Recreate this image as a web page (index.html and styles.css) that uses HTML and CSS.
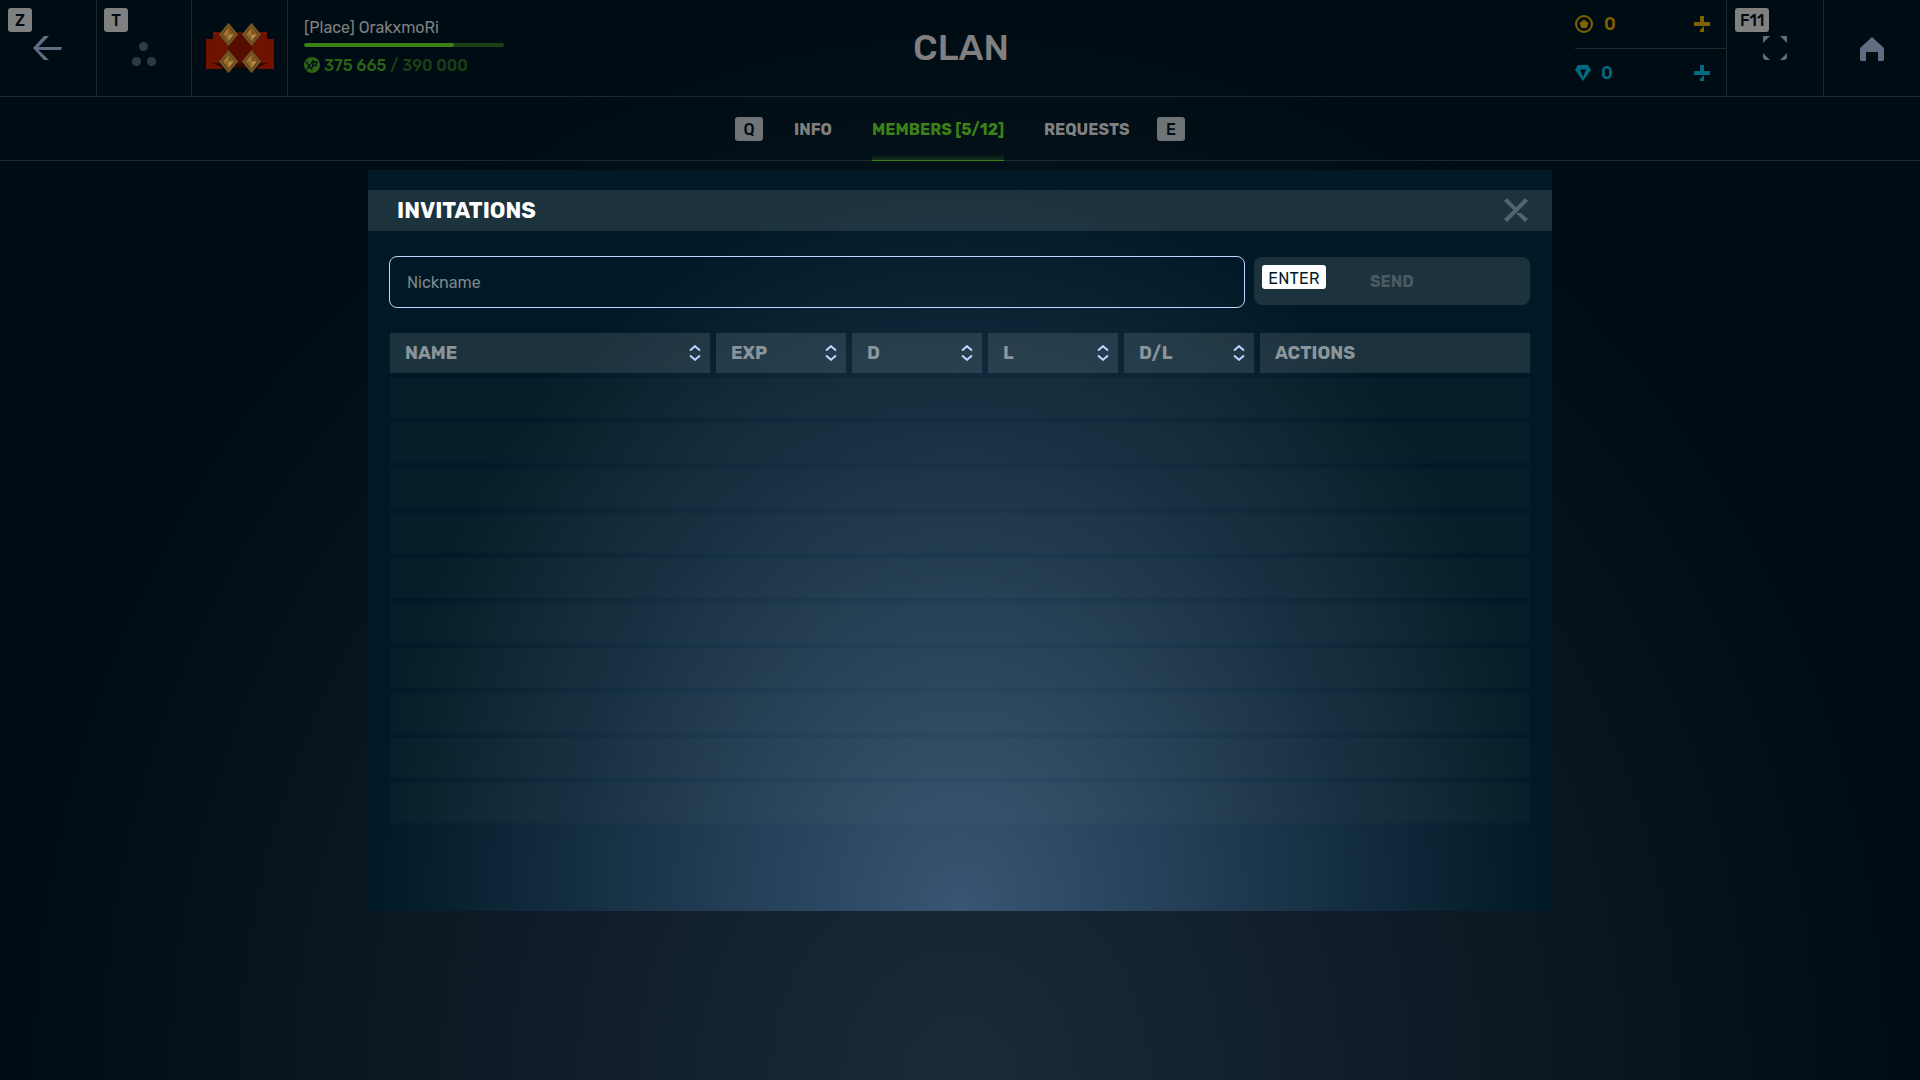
FILE: index.html
```html
<!DOCTYPE html>
<html lang="en">
<head>
<meta charset="utf-8">
<title>Clan</title>
<link rel="stylesheet" href="styles.css">
</head>
<body>
<div class="screen">
  <header class="topbar">
    <div class="cell cell-back"><span class="key corner">Z</span>
      <svg width="30" height="26" viewBox="0 0 30 26" fill="#616b82"><path d="M11 1h5L5.500 12h23.500l-1 3H5.500L16 25h-5L0 13z"/></svg>
    </div>
    <div class="cell cell-menu"><span class="key corner">T</span>
      <svg width="26" height="26" viewBox="0 0 26 26" fill="#2e3949"><circle cx="12.500" cy="5.500" r="4.500"/><circle cx="5.500" cy="20.500" r="4.500"/><circle cx="20.500" cy="20.500" r="4.500"/></svg>
    </div>
    <div class="cell cell-rank">
      <svg width="70" height="52" viewBox="0 0 70 52">
        <defs><g id="gem"><path d="M0-11.500 9.500 0 0 11.500-9.500 0z" fill="#7d5827" stroke="#4a3a20" stroke-width=".8"/><path d="M0-8 6.500 0 0 8-6.500 0z" fill="#8d6428" stroke="#4e3210" stroke-width=".8"/><path d="M0-6V0H-5z" fill="#a27a3b"/><path d="M0-6 5 0 0 1z" fill="#81551e"/><path d="M0 6V0L5 0z" fill="#b48d4b"/></g></defs>
        <path d="M1 16h12l7 27-4 3H1zM57 16h12v30H54l-4-3z" fill="#6f1200"/><path d="M8 40h54l-10 5H18z" fill="#300700"/><path d="M8 9h54v31H8z" fill="#6f1200"/><path d="M23 9h24v31H23z" fill="#570c00"/>
        <use href="#gem" x="23.500" y="11.500"/><use href="#gem" x="46.500" y="11.500"/><use href="#gem" x="23.500" y="38.500"/><use href="#gem" x="46.500" y="38.500"/>
      </svg>
    </div>
    <div class="player">
      <div class="nick">[Place] OrakxmoRi</div>
      <div class="progress"><div class="progress-fill" style="width:75%"></div></div>
      <div class="exp">
        <svg width="16" height="16" viewBox="0 0 16 16"><circle cx="8" cy="8" r="8" fill="#2c6417"/><path d="M2 4.500 7 12M9.500 3 2.500 13M7.500 12.500 9.500 5h3.500L12 8.500H9" fill="none" stroke="#000c12" stroke-width="1.300"/></svg>
        <b>375 665</b><span class="exp-max">/ 390 000</span>
      </div>
    </div>
    <h1 class="title">CLAN</h1>
    <div class="wallet">
      <div class="money gold">
        <svg width="18" height="18" viewBox="0 0 18 18"><circle cx="9" cy="9" r="8" fill="none" stroke="currentColor" stroke-width="2"/><path d="M9 4.500 13.500 7.900 11.800 13H6.200L4.500 7.900z" fill="currentColor"/></svg>
        <b>0</b>
        <svg class="plus" width="16" height="16" viewBox="0 0 16 16" fill="currentColor"><path d="M6 0h4v6h6v4h-6v6H6v-2l4-4H0V6h6z"/></svg>
      </div>
      <div class="money ruby">
        <svg width="16" height="16" viewBox="0 0 16 16"><path fill="currentColor" fill-rule="evenodd" d="M3 0h10l3 5-8 11L0 5zM5 4.500 8 12l3-7.500z"/></svg>
        <b>0</b>
        <svg class="plus" width="16" height="16" viewBox="0 0 16 16" fill="currentColor"><path d="M6 0h4v6h6v4h-6v6H6v-2l4-4H0V6h6z"/></svg>
      </div>
    </div>
    <div class="cell cell-full"><span class="key corner">F11</span>
      <svg width="24" height="24" viewBox="0 0 24 24" fill="#616b82"><path d="M0 0h7L0 7zM17 0h7v7zM0 17l7 7H2L0 22zM24 17v5l-2 2h-5z"/></svg>
    </div>
    <div class="cell cell-home">
      <svg width="24" height="24" viewBox="0 0 24 24" fill="#616b82"><path d="M12 0 24 11v12l-1 1h-5v-9H6v9H1l-1-1V11z"/></svg>
    </div>
  </header>
  <nav class="tabs">
    <span class="key key-q">Q</span>
    <span class="tab tab-info">INFO</span>
    <span class="tab tab-members active">MEMBERS [5/12]</span>
    <span class="tab tab-requests">REQUESTS</span>
    <span class="key key-e">E</span>
  </nav>
  <main class="dialog">
    <div class="dialog-head">
      <h2>INVITATIONS</h2>
      <svg width="24" height="24" viewBox="0 0 24 24" fill="#52646e"><path d="M3 0 12 9.500 21 0l3 3L3 24l-3-3L9.500 12 0 3zM12 15h5l7 6-3 3z"/></svg>
    </div>
    <div class="invite">
      <div class="field">Nickname</div>
      <div class="send"><span class="key key-enter">ENTER</span><b>SEND</b></div>
    </div>
    <div class="table">
      <div class="thead">
        <div class="th"><span>NAME</span><svg class="sort" viewBox="0 0 12 16"><path d="M1 5.500 6 1.200 11 5.500M1 10.500 6 14.800 11 10.500"/></svg></div>
        <div class="th"><span>EXP</span><svg class="sort" viewBox="0 0 12 16"><path d="M1 5.500 6 1.200 11 5.500M1 10.500 6 14.800 11 10.500"/></svg></div>
        <div class="th"><span>D</span><svg class="sort" viewBox="0 0 12 16"><path d="M1 5.500 6 1.200 11 5.500M1 10.500 6 14.800 11 10.500"/></svg></div>
        <div class="th"><span>L</span><svg class="sort" viewBox="0 0 12 16"><path d="M1 5.500 6 1.200 11 5.500M1 10.500 6 14.800 11 10.500"/></svg></div>
        <div class="th"><span>D/L</span><svg class="sort" viewBox="0 0 12 16"><path d="M1 5.500 6 1.200 11 5.500M1 10.500 6 14.800 11 10.500"/></svg></div>
        <div class="th"><span>ACTIONS</span></div>
      </div>
      <div class="row"></div><div class="row"></div><div class="row"></div><div class="row"></div><div class="row"></div>
      <div class="row"></div><div class="row"></div><div class="row"></div><div class="row"></div><div class="row"></div>
    </div>
  </main>
</div>
</body>
</html>
```
FILE: styles.css
```css
* { box-sizing: border-box; }
body { margin: 0; font-family: Rubik, Roboto, "Liberation Sans", sans-serif; background: #000c13; }
svg { display: block; flex: none; }
h1, h2 { margin: 0; }
.screen {
  width: 1920px; height: 1080px; overflow: hidden;
  display: flex; flex-direction: column;
  background: radial-gradient(50% 100% at 50% 100%, #1c2a39, #000c13);
}
.topbar { height: 97px; flex: none; display: flex; border-bottom: 1px solid #1e282d; }
.cell { position: relative; border-right: 1px solid #1e282d; display: flex; align-items: center; justify-content: center; flex: none; }
.cell-back { width: 97px; }
.cell-menu { width: 95px; padding: 12px 1px 0 0; }
.cell-rank { width: 96px; padding-top: 2px; }
.cell-full { width: 97px; }
.cell-home { width: 96px; border-right: 0; padding-top: 1px; }
.key {
  display: flex; align-items: center; justify-content: center; height: 24px; min-width: 24px;
  padding-top: 1px; border-radius: 3px; background: #808080; color: #000c13;
  font-size: 16px; font-weight: 500; line-height: 23px; flex: none;
}
.corner { position: absolute; left: 8px; top: 8px; padding: 1px 5px 0; }
.cell-menu .corner { left: 7px; }
.player { padding: 18px 0 0 16px; width: 240px; flex: none; }
.nick { font-size: 16px; line-height: 20px; color: #808080; white-space: nowrap; }
.progress { width: 200px; height: 4px; margin-top: 5px; border-radius: 2px; background: #1a4016; overflow: hidden; }
.progress-fill { height: 4px; border-radius: 2px; background: #3b8117; }
.exp { display: flex; align-items: center; margin-top: 8px; height: 20px; line-height: 21px; font-size: 16px; color: #2c6417; white-space: nowrap; }
.exp b { margin-left: 4px; font-weight: 500; }
.exp-max { margin-left: 4px; color: #1a4016; font-weight: 500; }
.title { flex: 1; text-align: center; font-size: 36px; font-weight: 500; line-height: 96px; color: #808080; padding-right: 181px; }
.wallet { width: 152px; flex: none; border-right: 1px solid #1e282d; }
.money { height: 48px; display: flex; align-items: center; font-size: 18px; font-weight: 500; }
.money b { font-weight: 500; }
.gold { height: 49px; color: #806000; border-bottom: 1px solid #1e282d; }
.gold b { margin-left: 11px; }
.ruby { color: #006b80; }
.ruby b { margin-left: 10px; }
.plus { margin-left: auto; margin-right: 16px; }
.tabs { height: 64px; flex: none; display: flex; padding-left: 735px; align-items: flex-start; border-bottom: 1px solid #1e282d; }
.tabs .key { min-width: 28px; margin-top: 20px; background: #6f7577; }
.tab { height: 64px; flex: none; line-height: 65px; font-size: 16px; font-weight: 700; color: #808080; white-space: nowrap; }
.tab-info { width: 38px; margin-left: 31px; }
.tab-members { width: 132px; margin-left: 40px; }
.tab-requests { width: 87px; margin-left: 40px; }
.key-e { margin-left: 26px; }
.active { color: #3b8117; border-bottom: 1px solid #3b8117; background: linear-gradient(to top, rgba(59,129,23,.28), transparent 6px); }
.dialog {
  width: 1184px; height: 741px; margin: 9px auto 0; padding-top: 20px; flex: none;
  background: radial-gradient(50% 100% at 50% 100%, #395573, #001926);
}
.dialog-head { height: 41px; display: flex; align-items: center; justify-content: space-between; padding: 0 24px 1px 29px; background: rgba(255,255,255,.11); }
.dialog-head h2 { font-size: 22px; font-weight: 700; color: #fff; }
.invite { display: flex; margin: 25px 22px 0 21px; gap: 9px; }
.field { width: 856px; height: 52px; border: 1px solid #bfd5ff; border-radius: 8px; padding: 0 17px; line-height: 52px; font-size: 16px; color: #7e878c; }
.send { width: 276px; height: 48px; margin-top: 1px; border-radius: 8px; background: rgba(255,255,255,.11); display: flex; padding: 8px; }
.key-enter { background: #fff; color: #001926; width: 64px; padding-top: 2px; font-weight: 400; letter-spacing: .2px; }
.send b { margin-left: 44px; font-size: 16px; line-height: 33px; color: #495a63; }
.table { margin: 25px 22px 0; display: flex; flex-direction: column; gap: 5px; }
.thead { display: grid; grid-template-columns: 320px repeat(4, 130px) 270px; gap: 6px; height: 40px; }
.th { display: flex; align-items: center; justify-content: space-between; padding: 0 9px 0 15px; background: rgba(255,255,255,.11); color: #8a959a; font-size: 18px; font-weight: 700; }
.sort { width: 12px; height: 16px; fill: none; stroke: #bfd5ff; stroke-width: 2; }
.row { height: 40px; background: rgba(255,255,170,.022); }
```
